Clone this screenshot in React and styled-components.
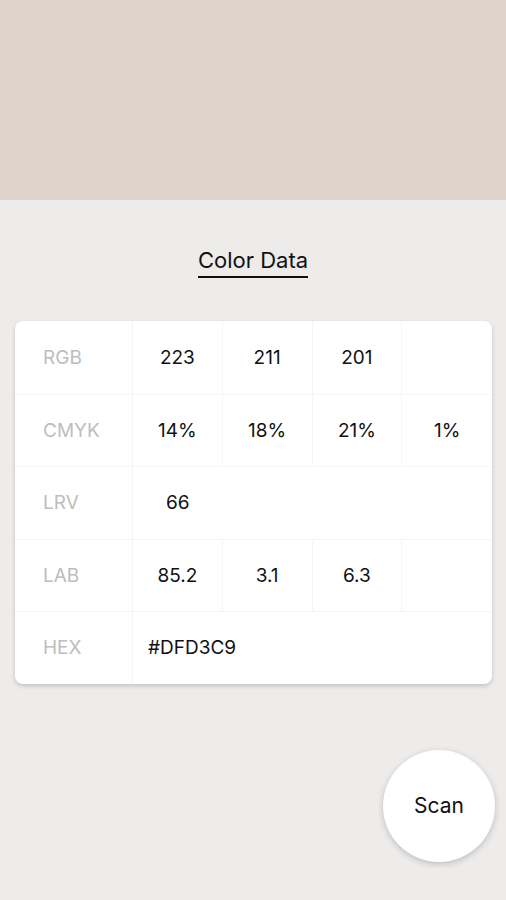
import React from "react";
import styled, { createGlobalStyle } from "styled-components";

const GlobalStyle = createGlobalStyle`
  html, body {
    margin: 0;
    padding: 0;
    background: #edecea;
    font-family: Inter, "Noto Sans", sans-serif;
  }
`;

const Page = styled.div`
  width: 506px;
  height: 900px;
  display: flex;
  flex-direction: column;
  background: #edecea;
  overflow: hidden;
`;

const Swatch = styled.div`
  height: 200px;
  background: ${(p) => p.color};
`;

const TitleWrap = styled.div`
  height: 121px;
  display: flex;
  justify-content: center;
  align-items: flex-start;
  padding-top: 47px;
  box-sizing: border-box;
`;

const Title = styled.h2`
  margin: 0;
  font-size: 22px;
  font-weight: 400;
  color: #111;
  padding-bottom: 2px;
  border-bottom: 2px solid #111;
  line-height: 27px;
`;

const Card = styled.div`
  margin: 0 14px 0 15px;
  background: #fff;
  border-radius: 8px;
  box-shadow: 0 2px 4px rgba(0, 0, 0, 0.18);
  overflow: hidden;
`;

const Row = styled.div`
  display: grid;
  grid-template-columns: 118px repeat(4, 1fr);
  height: 72.5px;
  box-sizing: border-box;
  border-top: ${(p) => (p.first ? "none" : "1px solid #f5f5f5")};
`;

const Label = styled.div`
  display: flex;
  align-items: center;
  padding-left: 28px;
  font-size: 19px;
  color: #bdbdbd;
  border-right: 1px solid #f3f3f3;
`;

const Cell = styled.div`
  display: flex;
  align-items: center;
  justify-content: ${(p) => (p.wide ? "flex-start" : "center")};
  padding-left: ${(p) => (p.wide ? "15px" : "0")};
  grid-column: ${(p) => (p.wide ? "span 4" : "auto")};
  font-size: 19px;
  color: #111;
  border-right: ${(p) => (p.last || p.wide ? "none" : "1px solid #f5f5f5")};
`;

const Footer = styled.div`
  flex: 1;
  display: flex;
  justify-content: flex-end;
  align-items: flex-start;
  padding: 66px 11px 0 0;
`;

const ScanButton = styled.button`
  width: 112px;
  height: 112px;
  border-radius: 50%;
  border: none;
  background: #fff;
  box-shadow: 0 2px 6px rgba(0, 0, 0, 0.2);
  font-family: Inter, "Noto Sans", sans-serif;
  font-size: 21px;
  color: #111;
`;

const rows = [
  { label: "RGB", values: ["223", "211", "201", ""] },
  { label: "CMYK", values: ["14%", "18%", "21%", "1%"] },
  { label: "LRV", values: ["66"], plain: true },
  { label: "LAB", values: ["85.2", "3.1", "6.3", ""] },
  { label: "HEX", wide: "#DFD3C9" },
];

export default function App() {
  return (
    <Page>
      <GlobalStyle />
      <Swatch color="#dfd3c9" />
      <TitleWrap>
        <Title>Color Data</Title>
      </TitleWrap>
      <Card>
        {rows.map((r, i) => (
          <Row key={r.label} first={i === 0}>
            <Label>{r.label}</Label>
            {r.wide ? (
              <Cell wide>{r.wide}</Cell>
            ) : r.plain ? (
              <Cell last>{r.values[0]}</Cell>
            ) : (
              r.values.map((v, j) => (
                <Cell key={j} last={j === 3}>
                  {v}
                </Cell>
              ))
            )}
          </Row>
        ))}
      </Card>
      <Footer>
        <ScanButton>Scan</ScanButton>
      </Footer>
    </Page>
  );
}
